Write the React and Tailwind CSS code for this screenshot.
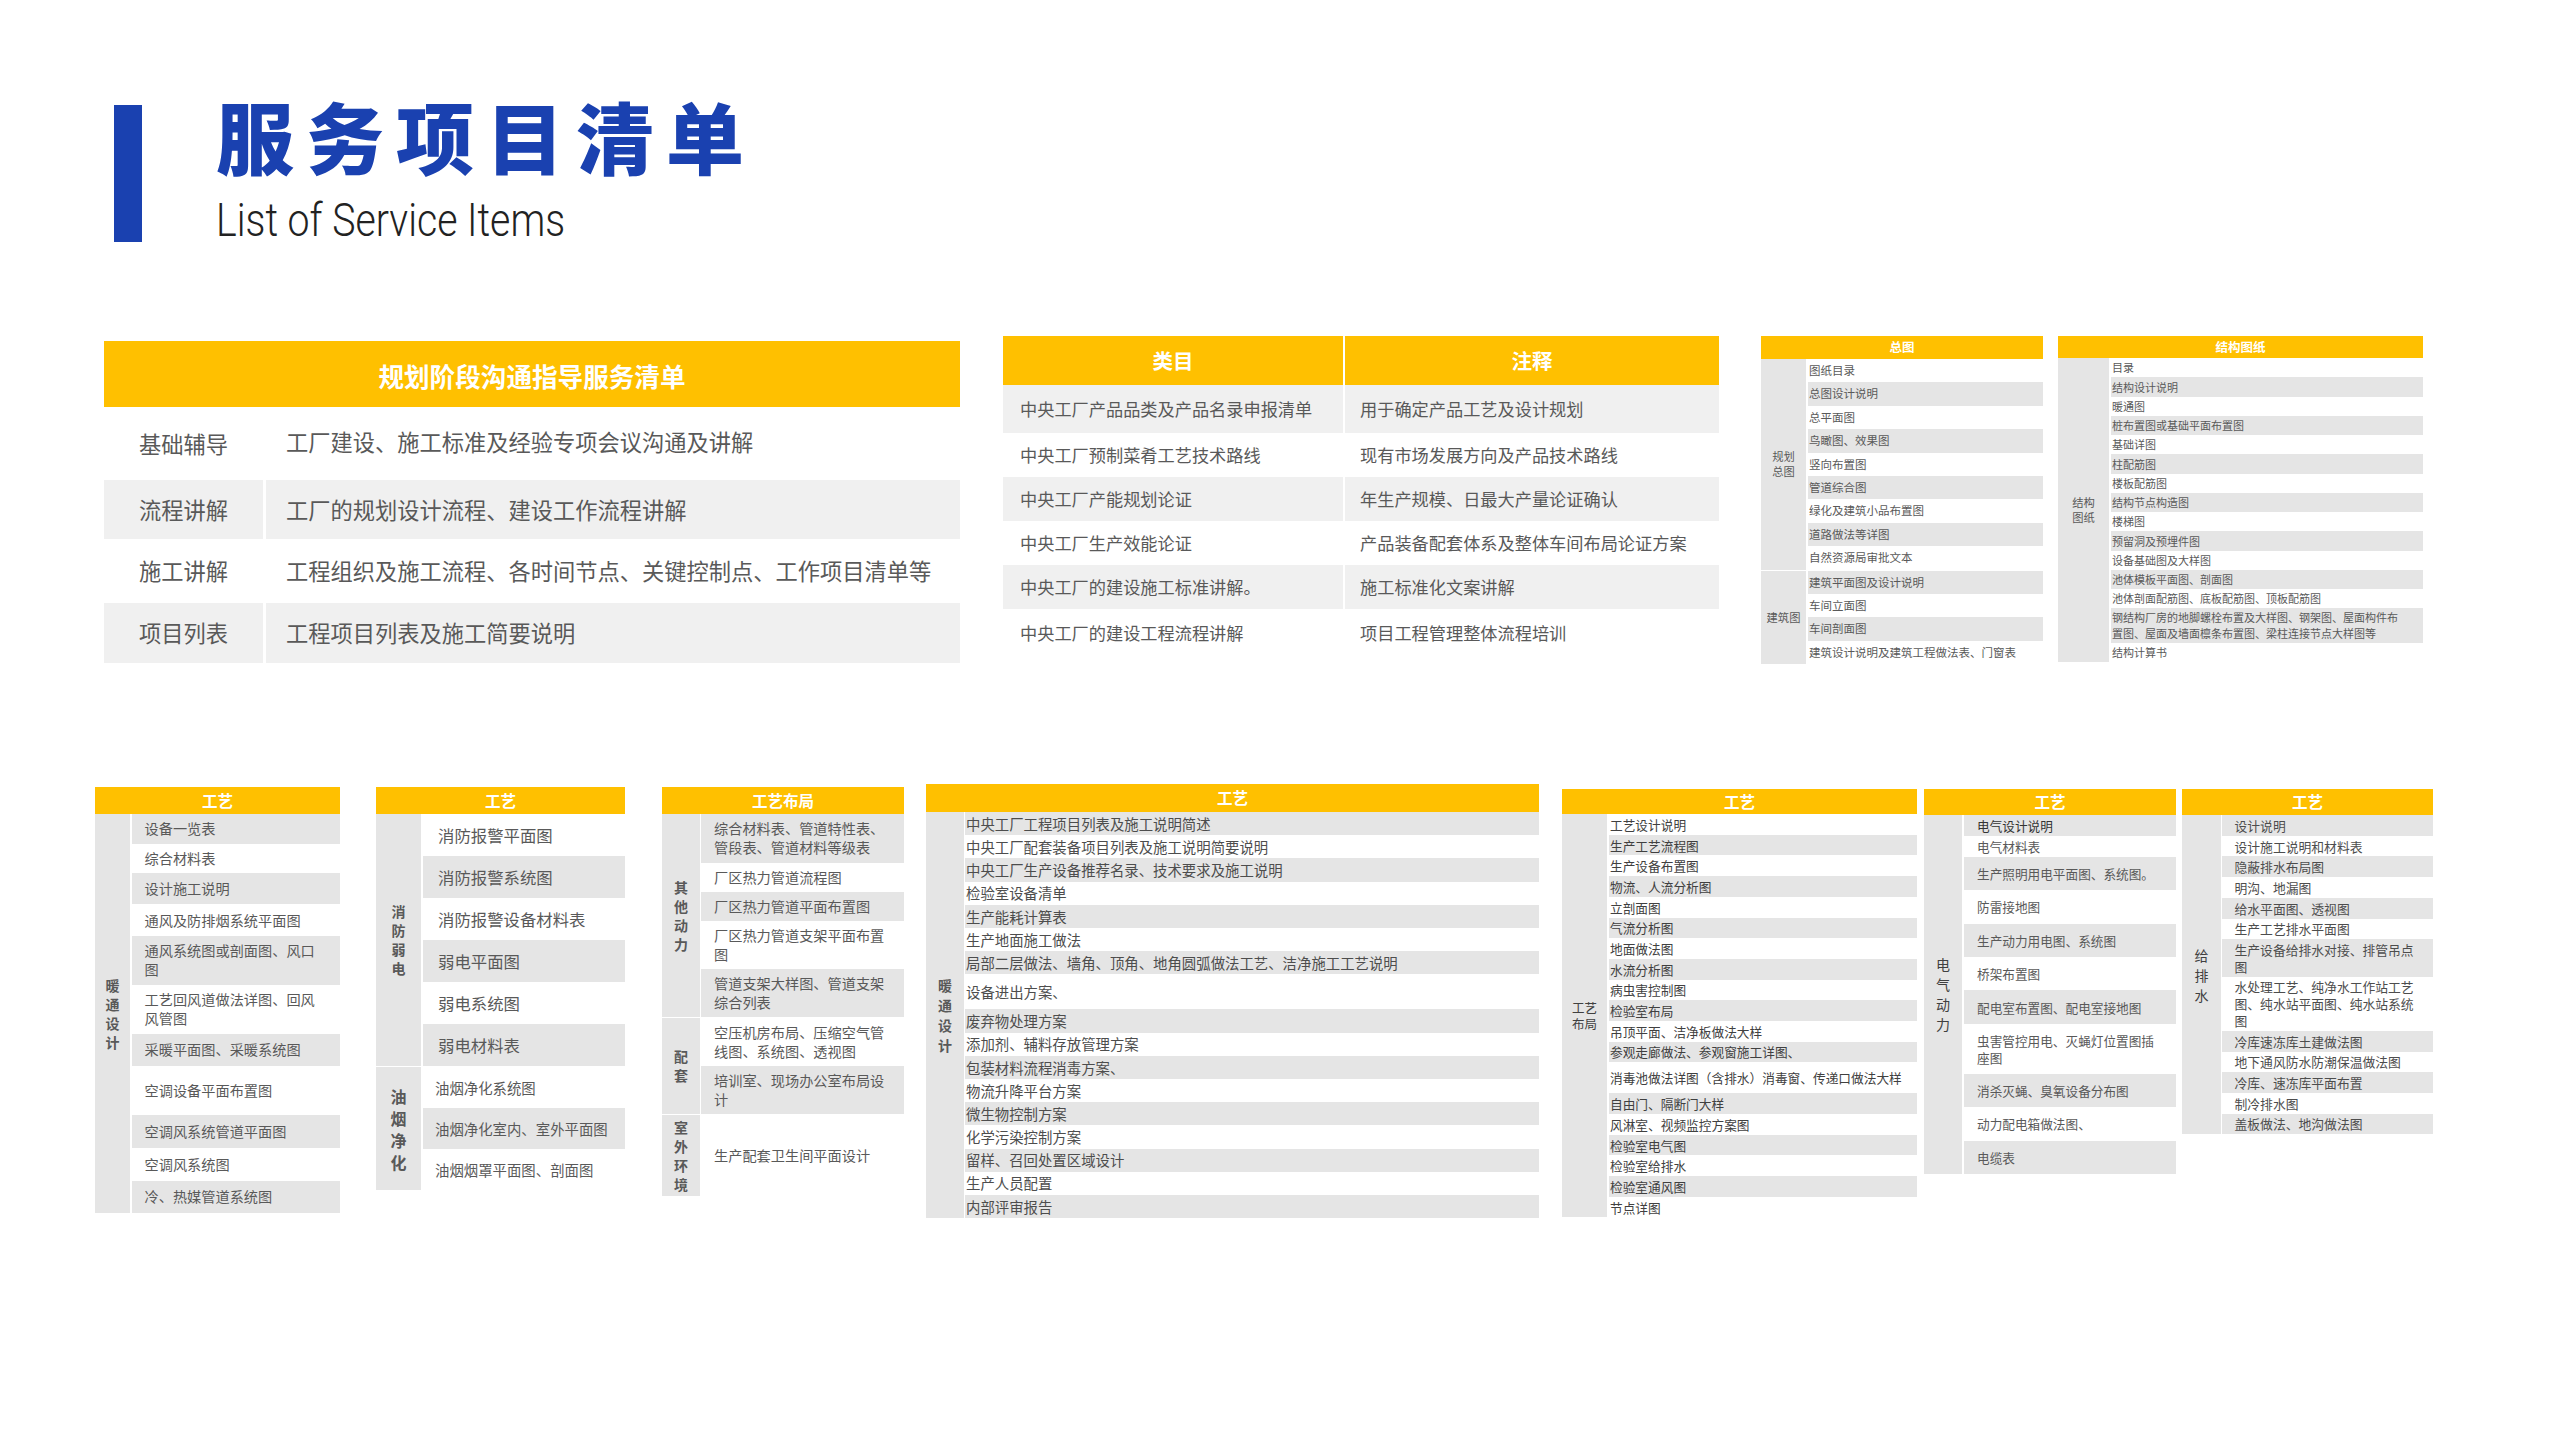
const FONT = "font-['Noto_Sans_CJK_SC','Noto_Sans',sans-serif]";

function Table({ wrap, title, headClass, labelClass, cellClass, firstGray, groups, gray = 'bg-[#e5e5e5]', gap = 'ml-[2px]' }) {
  let i = 0;
  return (
    <div className={wrap}>
      <div className={`bg-[#ffc000] text-white font-bold flex items-center justify-center whitespace-pre ${headClass}`}>{title}</div>
      {groups.map((g, gi) => (
        <div key={gi} className={`flex ${gi > 0 ? 'mt-px' : ''}`}>
          <div className={`${gray} shrink-0 flex items-center justify-center text-center whitespace-pre ${labelClass} ${g.labelClass || ''}`}>{g.label}</div>
          <div className={`flex-1 flex flex-col ${gap}`}>
            {g.rows.map(([text, h, extra]) => {
              const isGray = (i++ % 2 === 0) === firstGray;
              return (
                <div key={text} className={`flex items-center whitespace-pre ${h} ${isGray ? gray : 'bg-white'} ${cellClass} ${extra || ''}`}>{text}</div>
              );
            })}
          </div>
        </div>
      ))}
    </div>
  );
}

const r23 = 'h-[23.2px]';
const r234 = 'h-[23.4px]';
const r19 = 'h-[19.25px]';
const r20 = 'h-[20.7px]';
const r33 = 'h-[33.4px]';

export default function App() {
  return (
    <div className={`w-[2560px] h-[1440px] bg-white overflow-hidden flex flex-col text-[#595959] ${FONT}`}>
      {/* Title */}
      <div className="flex items-start pt-[105px] pl-[114px]">
        <div className="w-[28px] h-[137px] bg-[#1a41b0]" />
        <div className="ml-[74px] -mt-[20px] h-[157px] flex flex-col">
          <div className="text-[78px] leading-[100px] font-black tracking-[12px] text-[#1a41b0] whitespace-pre">服务项目清单</div>
          <div className="font-['Roboto',sans-serif] font-light text-[46px] leading-[60px] mt-[5px] text-[#222] origin-left scale-x-[0.853] whitespace-pre">List of Service Items</div>
        </div>
      </div>

      {/* Upper row */}
      <div className="flex items-start mt-[94px]">
        {/* T1 */}
        <div className="ml-[104px] mt-[5px] w-[856px] flex flex-col">
          <div className="bg-[#ffc000] h-[66px] pt-[4px] flex items-center justify-center text-white font-bold text-[25.6px]">规划阶段沟通指导服务清单</div>
          <div className="flex h-[73px] text-[22.25px] items-center bg-white">
            <div className="w-[159px] pl-[35px]">基础辅导</div>
            <div className="ml-[3px] pl-[20px] pb-[3px]">工厂建设、施工标准及经验专项会议沟通及讲解</div>
          </div>
          <div className="flex h-[59px] text-[22.25px]">
            <div className="w-[159px] pl-[35px] bg-[#f0f0f0] flex items-center">流程讲解</div>
            <div className="ml-[3px] pl-[20px] flex-1 bg-[#f0f0f0] flex items-center">工厂的规划设计流程、建设工作流程讲解</div>
          </div>
          <div className="flex h-[64px] text-[22.25px] items-center bg-white">
            <div className="w-[159px] pl-[35px]">施工讲解</div>
            <div className="ml-[3px] pl-[20px]">工程组织及施工流程、各时间节点、关键控制点、工作项目清单等</div>
          </div>
          <div className="flex h-[60px] text-[22.25px]">
            <div className="w-[159px] pl-[35px] bg-[#f0f0f0] flex items-center">项目列表</div>
            <div className="ml-[3px] pl-[20px] flex-1 bg-[#f0f0f0] flex items-center">工程项目列表及施工简要说明</div>
          </div>
        </div>

        {/* T2 */}
        <div className="ml-[43px] w-[716px] flex flex-col text-[17.2px]">
          <div className="flex h-[49px] gap-[2px] text-white font-bold text-[20.5px]">
            <div className="w-[340px] bg-[#ffc000] flex items-center justify-center">类目</div>
            <div className="flex-1 bg-[#ffc000] flex items-center justify-center">注释</div>
          </div>
          <div className="flex h-[48px] gap-[2px]">
            <div className="w-[340px] bg-[#f0f0f0] pl-[17px] flex items-center">中央工厂产品品类及产品名录申报清单</div>
            <div className="flex-1 bg-[#f0f0f0] pl-[15px] flex items-center">用于确定产品工艺及设计规划</div>
          </div>
          <div className="flex h-[44px] gap-[2px]">
            <div className="w-[340px] pl-[17px] flex items-center">中央工厂预制菜肴工艺技术路线</div>
            <div className="flex-1 pl-[15px] flex items-center">现有市场发展方向及产品技术路线</div>
          </div>
          <div className="flex h-[44px] gap-[2px]">
            <div className="w-[340px] bg-[#f0f0f0] pl-[17px] flex items-center">中央工厂产能规划论证</div>
            <div className="flex-1 bg-[#f0f0f0] pl-[15px] flex items-center">年生产规模、日最大产量论证确认</div>
          </div>
          <div className="flex h-[44px] gap-[2px]">
            <div className="w-[340px] pl-[17px] flex items-center">中央工厂生产效能论证</div>
            <div className="flex-1 pl-[15px] flex items-center">产品装备配套体系及整体车间布局论证方案</div>
          </div>
          <div className="flex h-[44px] gap-[2px]">
            <div className="w-[340px] bg-[#f0f0f0] pl-[17px] flex items-center">中央工厂的建设施工标准讲解。</div>
            <div className="flex-1 bg-[#f0f0f0] pl-[15px] flex items-center">施工标准化文案讲解</div>
          </div>
          <div className="flex h-[48px] gap-[2px]">
            <div className="w-[340px] pl-[17px] flex items-center">中央工厂的建设工程流程讲解</div>
            <div className="flex-1 pl-[15px] flex items-center">项目工程管理整体流程培训</div>
          </div>
        </div>

        {/* T3 */}
        <Table
          wrap="ml-[42px] w-[282px] flex flex-col"
          title="总图"
          headClass="h-[23px] text-[12.5px]"
          labelClass="w-[45px] text-[11.3px] leading-[15px]"
          cellClass="text-[11.5px] pl-[1px]"
          firstGray={false}
          groups={[
            { label: '规划\n总图', rows: [
              ['图纸目录', r234], ['总图设计说明', r234], ['总平面图', r234], ['鸟瞰图、效果图', r234], ['竖向布置图', r234],
              ['管道综合图', r234], ['绿化及建筑小品布置图', r234], ['道路做法等详图', r234], ['自然资源局审批文本', r234],
            ] },
            { label: '建筑图', rows: [
              ['建筑平面图及设计说明', r234], ['车间立面图', r234], ['车间剖面图', r234], ['建筑设计说明及建筑工程做法表、门窗表', r234],
            ] },
          ]}
        />

        {/* T4 */}
        <Table
          wrap="ml-[15px] w-[365px] flex flex-col"
          title="结构图纸"
          headClass="h-[22px] text-[12.5px]"
          labelClass="w-[51px] text-[11.3px] leading-[15px]"
          cellClass="text-[11px] pl-[1px]"
          firstGray={false}
          groups={[
            { label: '结构\n图纸', rows: [
              ['目录', r19], ['结构设计说明', r19], ['暖通图', r19], ['桩布置图或基础平面布置图', r19], ['基础详图', r19],
              ['柱配筋图', r19], ['楼板配筋图', r19], ['结构节点构造图', r19], ['楼梯图', r19], ['预留洞及预埋件图', r19],
              ['设备基础图及大样图', r19], ['池体模板平面图、剖面图', r19], ['池体剖面配筋图、底板配筋图、顶板配筋图', r19],
              ['钢结构厂房的地脚螺栓布置及大样图、钢架图、屋面构件布\n置图、屋面及墙面檩条布置图、梁柱连接节点大样图等', 'h-[34.5px] leading-[15.5px]'],
              ['结构计算书', r19],
            ] },
          ]}
        />
      </div>

      {/* Lower row */}
      <div className="flex items-start mt-[118px]">
        {/* T5 */}
        <Table
          wrap="ml-[95px] mt-[5px] w-[245px] flex flex-col"
          title="工艺"
          headClass="h-[27px] text-[15.5px]"
          labelClass="w-[35px] text-[14px] font-bold leading-[19px]"
          gap="ml-[2px]"
          cellClass="text-[14.2px] leading-[19px] pl-[12.5px]"
          firstGray={true}
          groups={[
            { label: '暖\n通\n设\n计', rows: [
              ['设备一览表', 'h-[29.5px]'], ['综合材料表', 'h-[29.5px]'], ['设计施工说明', 'h-[31px]'], ['通风及防排烟系统平面图', 'h-[32px]'],
              ['通风系统图或剖面图、风口\n图', 'h-[48.5px]'], ['工艺回风道做法详图、回风\n风管图', 'h-[49px]'], ['采暖平面图、采暖系统图', 'h-[32.5px]'],
              ['空调设备平面布置图', 'h-[49px]'], ['空调风系统管道平面图', 'h-[32.5px]'], ['空调风系统图', 'h-[33px]'], ['冷、热媒管道系统图', 'h-[32.5px]'],
            ] },
          ]}
        />

        {/* T6 */}
        <Table
          wrap="ml-[36px] mt-[5px] w-[249px] flex flex-col"
          title="工艺"
          headClass="h-[27px] text-[15.5px]"
          labelClass="w-[45px] font-bold"
          gap="ml-[2px]"
          cellClass=""
          firstGray={false}
          groups={[
            { label: '消\n防\n弱\n电', labelClass: 'text-[14px] leading-[19px]', rows: [
              ['消防报警平面图', 'h-[42px] text-[16.4px] pl-[15px]'], ['消防报警系统图', 'h-[42px] text-[16.4px] pl-[15px]'],
              ['消防报警设备材料表', 'h-[42px] text-[16.4px] pl-[15px]'], ['弱电平面图', 'h-[42px] text-[16.4px] pl-[15px]'],
              ['弱电系统图', 'h-[42px] text-[16.4px] pl-[15px]'], ['弱电材料表', 'h-[42px] text-[16.4px] pl-[15px]'],
            ] },
            { label: '油\n烟\n净\n化', labelClass: 'text-[16px] leading-[22px]', rows: [
              ['油烟净化系统图', 'h-[41px] text-[14.4px] pl-[12px]'], ['油烟净化室内、室外平面图', 'h-[41px] text-[14.4px] pl-[12px]'],
              ['油烟烟罩平面图、剖面图', 'h-[41px] text-[14.4px] pl-[12px]'],
            ] },
          ]}
        />

        {/* T7 */}
        <Table
          wrap="ml-[37px] mt-[5px] w-[242px] flex flex-col"
          title="工艺布局"
          headClass="h-[27px] text-[15.5px]"
          labelClass="w-[38px] text-[14px] font-bold leading-[19px]"
          gap="ml-[1px]"
          cellClass="text-[14.2px] leading-[19px] pl-[13px]"
          firstGray={true}
          groups={[
            { label: '其\n他\n动\n力', rows: [
              ['综合材料表、管道特性表、\n管段表、管道材料等级表', 'h-[48.5px]'], ['厂区热力管道流程图', 'h-[29px]'], ['厂区热力管道平面布置图', 'h-[29.5px]'],
              ['厂区热力管道支架平面布置\n图', 'h-[48px]'], ['管道支架大样图、管道支架\n综合列表', 'h-[48px]'],
            ] },
            { label: '配\n套', rows: [
              ['空压机房布局、压缩空气管\n线图、系统图、透视图', 'h-[48px]'], ['培训室、现场办公室布局设\n计', 'h-[48px]'],
            ] },
            { label: '室\n外\n环\n境', rows: [
              ['生产配套卫生间平面设计', 'h-[81px]'],
            ] },
          ]}
        />

        {/* T8 */}
        <Table
          wrap="ml-[22px] mt-[2px] w-[613px] flex flex-col"
          title="工艺"
          headClass="h-[28px] text-[15.5px]"
          labelClass="w-[38px] text-[14px] font-bold leading-[20px]"
          gap="ml-[1px]"
          cellClass="text-[14.4px] pl-[1px] text-[#4d4d4d]"
          firstGray={true}
          groups={[
            { label: '暖\n通\n设\n计', rows: [
              ['中央工厂工程项目列表及施工说明简述', r23], ['中央工厂配套装备项目列表及施工说明简要说明', r23], ['中央工厂生产设备推荐名录、技术要求及施工说明', r23],
              ['检验室设备清单', r23], ['生产能耗计算表', r23], ['生产地面施工做法', r23], ['局部二层做法、墙角、顶角、地角圆弧做法工艺、洁净施工工艺说明', r23],
              ['设备进出方案、', 'h-[35px]'], ['废弃物处理方案', r23], ['添加剂、辅料存放管理方案', r23], ['包装材料流程消毒方案、', r23],
              ['物流升降平台方案', r23], ['微生物控制方案', r23], ['化学污染控制方案', r23], ['留样、召回处置区域设计', r23], ['生产人员配置', r23], ['内部评审报告', r23],
            ] },
          ]}
        />

        {/* T9 */}
        <Table
          wrap="ml-[23px] mt-[7px] w-[355px] flex flex-col"
          title="工艺"
          headClass="h-[25px] text-[15.5px]"
          labelClass="w-[45px] text-[12.5px] leading-[16px] text-[#404040]"
          gap="ml-[2px]"
          cellClass="text-[12.7px] pl-[1px] text-[#404040]"
          firstGray={false}
          groups={[
            { label: '工艺\n布局', rows: [
              ['工艺设计说明', r20], ['生产工艺流程图', r20], ['生产设备布置图', r20], ['物流、人流分析图', r20], ['立剖面图', r20], ['气流分析图', r20],
              ['地面做法图', r20], ['水流分析图', r20], ['病虫害控制图', r20], ['检验室布局', r20], ['吊顶平面、洁净板做法大样', r20], ['参观走廊做法、参观窗施工详图、', r20],
              ['消毒池做法详图（含排水）消毒窗、传递口做法大样', 'h-[31px]'], ['自由门、隔断门大样', r20], ['风淋室、视频监控方案图', r20], ['检验室电气图', r20],
              ['检验室给排水', r20], ['检验室通风图', r20], ['节点详图', r20],
            ] },
          ]}
        />

        {/* T10 */}
        <Table
          wrap="ml-[7px] mt-[7px] w-[252px] flex flex-col"
          title="工艺"
          headClass="h-[26px] text-[15.5px]"
          labelClass="w-[38px] text-[14px] leading-[20px] text-[#404040]"
          gap="ml-[2px]"
          cellClass="text-[12.65px] leading-[17px] pl-[13px]"
          firstGray={true}
          groups={[
            { label: '电\n气\n动\n力', rows: [
              ['电气设计说明', 'h-[21px] text-[#333]'], ['电气材料表', 'h-[20.7px]'], ['生产照明用电平面图、系统图。', r33], ['防雷接地图', r33], ['生产动力用电图、系统图', r33],
              ['桥架布置图', r33], ['配电室布置图、配电室接地图', r33], ['虫害管控用电、灭蝇灯位置图插\n座图', 'h-[50px]'], ['消杀灭蝇、臭氧设备分布图', r33],
              ['动力配电箱做法图、', r33], ['电缆表', r33],
            ] },
          ]}
        />

        {/* T11 */}
        <Table
          wrap="ml-[6px] mt-[7px] w-[251px] flex flex-col"
          title="工艺"
          headClass="h-[26px] text-[15.5px]"
          labelClass="w-[39px] text-[14px] leading-[20px] text-[#404040]"
          gap="ml-[1px]"
          cellClass="text-[12.8px] leading-[17px] pl-[12.5px] text-[#4d4d4d]"
          firstGray={true}
          groups={[
            { label: '给\n排\n水', rows: [
              ['设计说明', r20], ['设计施工说明和材料表', r20], ['隐蔽排水布局图', r20], ['明沟、地漏图', r20], ['给水平面图、透视图', r20], ['生产工艺排水平面图', r20],
              ['生产设备给排水对接、排管吊点\n图', 'h-[37.7px]'], ['水处理工艺、纯净水工作站工艺\n图、纯水站平面图、纯水站系统\n图', 'h-[54px]'],
              ['冷库速冻库土建做法图', r20], ['地下通风防水防潮保温做法图', r20], ['冷库、速冻库平面布置', r20], ['制冷排水图', r20], ['盖板做法、地沟做法图', r20],
            ] },
          ]}
        />
      </div>
    </div>
  );
}
